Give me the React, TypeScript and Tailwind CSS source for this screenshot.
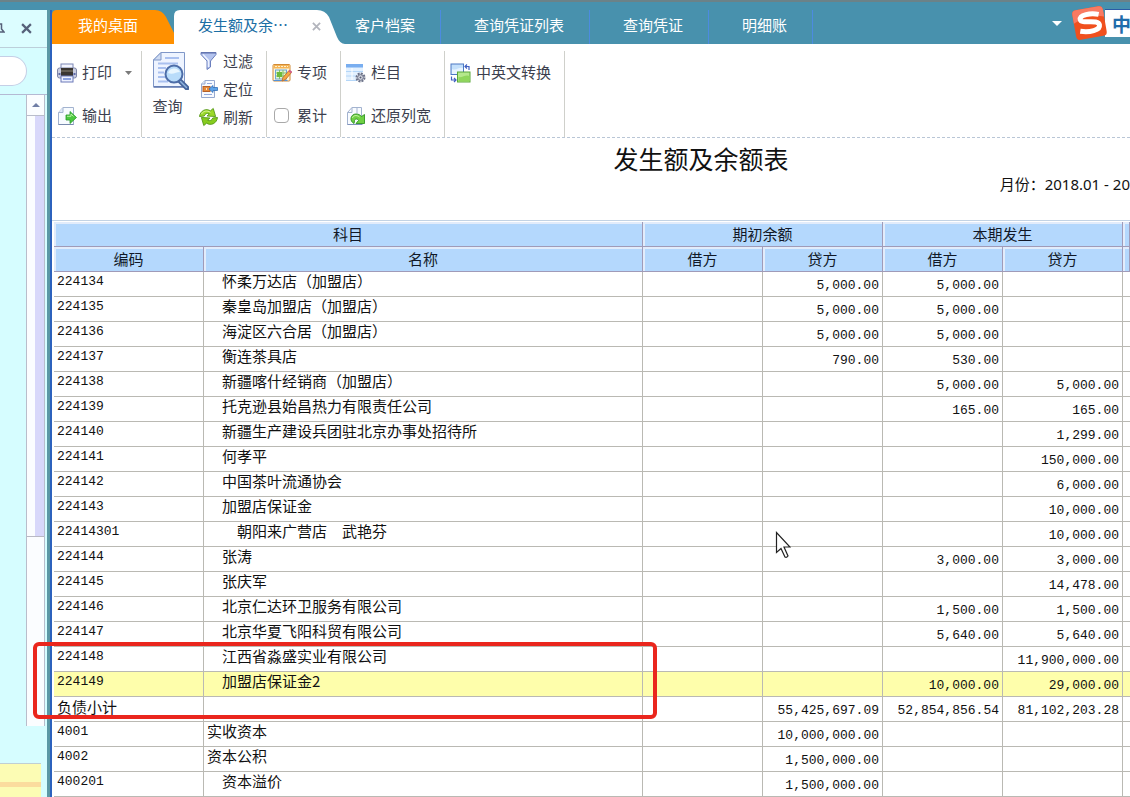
import type { ReactNode } from 'react'

type Row = {
  code: string
  name?: string
  level?: number
  amounts: [string, string, string, string]
  active?: boolean
}

const rows: Row[] = [
  { code: '224134', name: '怀柔万达店（加盟店）', level: 1, amounts: ['', '5,000.00', '5,000.00', ''] },
  { code: '224135', name: '秦皇岛加盟店（加盟店）', level: 1, amounts: ['', '5,000.00', '5,000.00', ''] },
  { code: '224136', name: '海淀区六合居（加盟店）', level: 1, amounts: ['', '5,000.00', '5,000.00', ''] },
  { code: '224137', name: '衡连茶具店', level: 1, amounts: ['', '790.00', '530.00', ''] },
  { code: '224138', name: '新疆喀什经销商（加盟店）', level: 1, amounts: ['', '', '5,000.00', '5,000.00'] },
  { code: '224139', name: '托克逊县始昌热力有限责任公司', level: 1, amounts: ['', '', '165.00', '165.00'] },
  { code: '224140', name: '新疆生产建设兵团驻北京办事处招待所', level: 1, amounts: ['', '', '', '1,299.00'] },
  { code: '224141', name: '何孝平', level: 1, amounts: ['', '', '', '150,000.00'] },
  { code: '224142', name: '中国茶叶流通协会', level: 1, amounts: ['', '', '', '6,000.00'] },
  { code: '224143', name: '加盟店保证金', level: 1, amounts: ['', '', '', '10,000.00'] },
  { code: '22414301', name: '朝阳来广营店　武艳芬', level: 2, amounts: ['', '', '', '10,000.00'] },
  { code: '224144', name: '张涛', level: 1, amounts: ['', '', '3,000.00', '3,000.00'] },
  { code: '224145', name: '张庆军', level: 1, amounts: ['', '', '', '14,478.00'] },
  { code: '224146', name: '北京仁达环卫服务有限公司', level: 1, amounts: ['', '', '1,500.00', '1,500.00'] },
  { code: '224147', name: '北京华夏飞阳科贸有限公司', level: 1, amounts: ['', '', '5,640.00', '5,640.00'] },
  { code: '224148', name: '江西省淼盛实业有限公司', level: 1, amounts: ['', '', '', '11,900,000.00'] },
  { code: '224149', name: '加盟店保证金2', level: 1, amounts: ['', '', '10,000.00', '29,000.00'], active: true },
  { code: '负债小计', amounts: ['', '55,425,697.09', '52,854,856.54', '81,102,203.28'] },
  { code: '4001', name: '实收资本', amounts: ['', '10,000,000.00', '', ''] },
  { code: '4002', name: '资本公积', amounts: ['', '1,500,000.00', '', ''] },
  { code: '400201', name: '资本溢价', level: 1, amounts: ['', '1,500,000.00', '', ''] },
]

const indent = ['pl-[3px]', 'pl-[18px]', 'pl-[33px]']

const PrintIcon = () => (
  <svg width="20" height="20" viewBox="0 0 20 20">
    <rect x="4" y="1" width="12" height="6" fill="#f4f6ff" stroke="#7b86b5" />
    <rect x="0.5" y="5" width="19" height="10" rx="2" fill="#c9cde0" stroke="#7f86a8" />
    <rect x="4" y="5" width="12" height="8" fill="#3a3631" />
    <path d="M4 8h12" stroke="#8d8676" />
    <path d="M1.500 11h2M16.500 11h2" stroke="#5e6ba8" strokeWidth="2" />
    <rect x="4" y="13" width="12" height="6" fill="#eef2ff" stroke="#6b78b8" />
    <path d="M6 16h8" stroke="#6a86d6" strokeWidth="1.500" />
  </svg>
)

const ExportIcon = () => (
  <svg width="20" height="20" viewBox="0 0 20 20">
    <path d="M6 1.500h10.500v17h-15V6.500z" fill="#f7fbff" stroke="#a3b3cf" />
    <path d="M6 1.500v5H1.500" fill="#dfe9f7" stroke="#a3b3cf" />
    <path d="M1.500 18.500h15" stroke="#7789ad" />
    <path d="M9 9h4V5.500l6.500 6-6.500 6V14H9z" fill="#4cc83f" stroke="#279a2a" strokeWidth="0.800" />
    <path d="M10 10.300h4V8l2.500 2.500" stroke="#b4f0a0" fill="none" />
  </svg>
)

const QueryIcon = () => (
  <svg width="37" height="39" viewBox="0 0 37 39">
    <path d="M9 1.500h23.500v34h-31V9z" fill="#eef4ff" stroke="#7f97c8" />
    <path d="M9 1.500V9H1.500z" fill="#cfdcf3" stroke="#7f97c8" />
    <path d="M13 7h14M6 12.500h20M6 17h8M6 21.500h6M6 26h7M6 30.500h10" stroke="#a9c0ef" strokeWidth="2" />
    <path d="M1.500 36h31" stroke="#5b74ae" strokeWidth="1.500" />
    <path d="M28 30l7 7" stroke="#46659c" strokeWidth="5" strokeLinecap="round" />
    <path d="M28.500 30.500l6 6" stroke="#8fb3df" strokeWidth="1.500" strokeLinecap="round" />
    <circle cx="22" cy="23" r="8.500" fill="#b9dcfa" stroke="#4d6da8" strokeWidth="2" />
    <path d="M16 22a6.500 6.500 0 0 1 12-1c-4 0-7 3-12 1z" fill="#e9f6ff" />
  </svg>
)

const FilterIcon = () => (
  <svg width="19" height="20" viewBox="0 0 19 20">
    <path d="M2 1.500h15v2L11.500 10v6L8 18.500V10L2 3.500z" fill="#b3c3ee" stroke="#6b7fbd" />
    <path d="M4 3.500l5.500 6V16" stroke="#eef3ff" fill="none" strokeWidth="1.500" />
    <path d="M2 2h15" stroke="#5c6ca5" />
  </svg>
)

const LocateIcon = () => (
  <svg width="19" height="20" viewBox="0 0 19 20">
    <path d="M6 1.500h9.500v17h-13V5z" fill="#f7faff" stroke="#96a9d0" />
    <path d="M6 1.500V5H2.500" stroke="#96a9d0" fill="#dfe9f7" />
    <path d="M8 4.500h5M5 15.500h8" stroke="#93aadd" />
    <rect x="4" y="7.500" width="7" height="5" fill="#e68a3a" stroke="#b3602a" />
    <path d="M7.500 9v2" stroke="#f9e3c6" />
    <path d="M18.500 8.500H14V6.500L10 10l4 3.500v-2h4.500z" fill="#5ea3e8" stroke="#2f6db8" strokeWidth="0.800" />
  </svg>
)

const RefreshIcon = () => (
  <svg width="19" height="20" viewBox="0 0 20 20">
    <path d="M0.500 9.500C1.500 3 7.500 0.500 12 3.500L15 1l2.500 8.500-9-.5 2.500-2.500C9 5.500 6 6.500 5.500 9z" fill="#9bd829" stroke="#4f9410" strokeWidth="0.900" />
    <path d="M19.500 10.500c-1 6.500-7 9-11.500 6L5 19l-2.500-8.500 9 .5L9 13.500c2 1 5 0 5.500-2.500z" fill="#86cc1e" stroke="#4f9410" strokeWidth="0.900" />
    <path d="M2.500 7C4.500 3.500 8.500 3 12 5" stroke="#d9f59a" fill="none" />
  </svg>
)

const SpecialIcon = () => (
  <svg width="20" height="20" viewBox="0 0 20 20">
    <rect x="1" y="1.500" width="17" height="16.500" rx="1" fill="#fff7dc" stroke="#d28a34" />
    <rect x="1.500" y="2" width="16" height="3.500" fill="#f4b557" />
    <path d="M3 3.500h13" stroke="#fff0cf" strokeDasharray="2 1" />
    <rect x="3.500" y="7" width="11" height="9" fill="#e6f6d6" stroke="#6da5d8" />
    <path d="M4 10h10M4 13h10M7.500 7v9M11 7v9" stroke="#86c06a" />
    <rect x="5" y="9" width="5" height="5" fill="#6dbb3c" />
    <path d="M1.500 17.500h14" stroke="#5592d6" />
    <path d="M10 18l1-3.500 6-7 2.500 2-6 7z" fill="#f5a742" stroke="#c06f2f" strokeWidth="0.900" />
    <path d="M17 7.500l2.500 2" stroke="#d05d8c" strokeWidth="2" />
  </svg>
)

const ColumnsIcon = () => (
  <svg width="20" height="20" viewBox="0 0 20 20">
    <rect x="0" y="1" width="17" height="16.500" fill="#e3f1ff" />
    <rect x="0" y="1" width="17" height="3.500" fill="#79aef0" />
    <path d="M0 8.500h17M0 13h17M0 17.500h11" stroke="#b4d6f8" />
    <path d="M6 5v12" stroke="#ffffff" />
    <circle cx="14.500" cy="14.500" r="4" fill="#eceef4" stroke="#6c7288" strokeWidth="2" strokeDasharray="2 1.100" />
    <circle cx="14.500" cy="14.500" r="2.800" fill="#d7dae4" stroke="#6c7288" />
    <circle cx="14.500" cy="14.500" r="1" fill="#555b70" />
  </svg>
)

const RestoreIcon = () => (
  <svg width="20" height="20" viewBox="0 0 20 20">
    <path d="M6 1.500h9.500v17h-14V6.500z" fill="#f8fbff" stroke="#a3b3cf" />
    <path d="M6 1.500v5H1.500M11 1.500v6" stroke="#a3b3cf" fill="none" />
    <path d="M1.500 18.500h15" stroke="#7f93bd" />
    <path
      d="M8 17.500C3 15 4.500 8 10 8c2.500 0 4.500 1 5.500 2.500L18.500 8.500v9h-8.500l2.500-3c-1-2-3.500-2-4 0-.3 1 0 2-.5 3z"
      fill="#6fd044"
      stroke="#2f9422"
      strokeWidth="0.900"
    />
    <path d="M6.500 12c.5-2.500 4-3.500 7-1" stroke="#c9f5a8" fill="none" />
  </svg>
)

const SwapIcon = () => (
  <svg width="21" height="20" viewBox="0 0 21 20">
    <rect x="1" y="1" width="12.500" height="10.500" fill="#c4e0fb" stroke="#4c79c4" />
    <path d="M2 6c4 2 7-2 11-1v6H2z" fill="#e6f3ff" />
    <rect x="7.500" y="9" width="12.500" height="10" fill="#b5e88c" stroke="#5aa83a" />
    <path d="M8.500 14c4 1 7-3 11-1v5.500h-11z" fill="#8fd65c" />
    <path d="M15.500 3.500h3.500V7M17 1.500l-2 2 2 2" fill="none" stroke="#3f5fc0" strokeWidth="1.200" />
    <path d="M1.500 13.500V17h4M4 15l2 2-2 2" fill="none" stroke="#3f5fc0" strokeWidth="1.200" />
  </svg>
)

const CloseIcon = ({ size, color }: { size: number; color: string }) => (
  <svg width={size} height={size} viewBox="0 0 10 10">
    <path d="M1 1l8 8M9 1L1 9" stroke={color} strokeWidth="2" />
  </svg>
)

const Tool = ({ icon, label, children }: { icon: ReactNode; label: string; children?: ReactNode }) => (
  <button type="button" className="flex items-center gap-[5px] whitespace-nowrap">
    {icon}
    <span>{label}</span>
    {children}
  </button>
)

const ToolGroup = ({ children }: { children: ReactNode }) => (
  <div className="grid shrink-0 auto-rows-[43px] items-center border-r border-[#cfd0cb] pr-[13px] pl-[5px]">
    {children}
  </div>
)

const Sidebar = () => (
  <aside className="flex w-[47px] shrink-0 flex-col overflow-hidden bg-[#d6fdff]">
    <div className="flex h-[38px] shrink-0 items-center justify-between border-b border-[#bccfda] bg-[#dcfdff] pr-[15px]">
      <svg width="5" height="12" viewBox="0 0 5 12">
        <path d="M0 1h1.500v5L4 9H0" stroke="#566079" strokeWidth="1.500" fill="none" />
      </svg>
      <button type="button" aria-label="关闭">
        <CloseIcon size={11} color="#56617a" />
      </button>
    </div>
    <div className="h-[46px] shrink-0 pt-[8px]">
      <input
        type="text"
        aria-label="搜索"
        className="h-[30px] w-[27px] rounded-r-full border border-l-0 border-[#c5cfe6] bg-white"
      />
    </div>
    <div className="flex h-[632px] shrink-0 justify-end border-t border-[#b5b9d3] pr-[2px]">
      <div className="w-[19px] border-x border-[#b9bdcb] bg-[#fbfdff]">
        <button
          type="button"
          aria-label="向上滚动"
          className="flex h-[21px] w-full items-center justify-center border-b border-[#b9bdcb]"
        >
          <svg width="8" height="4" viewBox="0 0 8 4">
            <path d="M0 4l4-4 4 4z" fill="#6f7ea6" />
          </svg>
        </button>
        <div className="h-[421px] border-b border-[#b9b9c4] pl-[8px]">
          <div className="h-full bg-[#d8d8fa]" />
        </div>
      </div>
    </div>
    <div className="mt-[37px] mr-[6px] flex-1 border-t border-[#c0cfd4] bg-[#fcfcb4] pt-[18px]">
      <div className="h-[5px] bg-[#fbdc9e]" />
    </div>
  </aside>
)

const Tabs = () => (
  <nav className="flex h-[34px] shrink-0 bg-[#4891ad] text-white">
    <button type="button" className="relative w-[122px] shrink-0 pr-[10px] pb-[4px]">
      <svg className="absolute inset-0" width="122" height="34" viewBox="0 0 122 34">
        <path d="M0 34V5q0-5 5-5h98q7 0 11 7l8 16v11z" fill="#ff9000" />
      </svg>
      <span className="relative">我的桌面</span>
    </button>
    <div className="relative flex w-[171px] shrink-0 items-center justify-between px-[24px] pb-[4px]">
      <svg className="absolute inset-0" width="171" height="34" viewBox="0 0 171 34">
        <path d="M0 34V6q0-6 6-6h137q8 0 12 7l8 20q3 7 8 7z" fill="#ffffff" />
      </svg>
      <button type="button" className="relative text-[#1c6fa5]">
        发生额及余…
      </button>
      <button type="button" aria-label="关闭标签" className="relative pt-[3px]">
        <CloseIcon size={9} color="#b3b5bd" />
      </button>
    </div>
    <button type="button" className="border-r border-[#4c8be0] pr-[25px] pb-[4px] pl-[10px]">
      客户档案
    </button>
    {['查询凭证列表', '查询凭证', '明细账'].map((e) => (
      <button type="button" className="border-r border-[#4c8be0] pr-[25px] pb-[4px] pl-[33px]" key={e}>
        {e}
      </button>
    ))}
    <button type="button" aria-label="更多标签" className="mr-[68px] mb-[8px] ml-auto">
      <svg width="10" height="5" viewBox="0 0 10 5">
        <path d="M0 0h10L5 5z" fill="#ffffff" />
      </svg>
    </button>
  </nav>
)

const Toolbar = () => (
  <div className="flex h-[94px] shrink-0 border-b border-dashed border-[#b9c6d6] pt-[7px] text-[#3c3f4e]">
    <ToolGroup>
      <Tool icon={<PrintIcon />} label="打印">
        <svg className="-mr-[4px] ml-[8px]" width="7" height="4" viewBox="0 0 7 4">
          <path d="M0 0h7L3.500 4z" fill="#7b7b7b" />
        </svg>
      </Tool>
      <Tool icon={<ExportIcon />} label="输出" />
    </ToolGroup>
    <div className="flex shrink-0 gap-[10px] border-r border-[#cfd0cb] pr-[13px] pl-[10px]">
      <button type="button" className="flex flex-col items-center gap-[6px]">
        <QueryIcon />
        <span className="mr-[6px] leading-[20px]">查询</span>
      </button>
      <div className="-mt-[4px] grid auto-rows-[28px] content-start items-center">
        <Tool icon={<FilterIcon />} label="过滤" />
        <Tool icon={<LocateIcon />} label="定位" />
        <Tool icon={<RefreshIcon />} label="刷新" />
      </div>
    </div>
    <ToolGroup>
      <Tool icon={<SpecialIcon />} label="专项" />
      <label className="flex items-center gap-[8px]">
        <input
          type="checkbox"
          className="ml-[2px] h-[15px] w-[15px] appearance-none rounded-sm border border-[#a9a9a9] bg-white"
        />
        累计
      </label>
    </ToolGroup>
    <ToolGroup>
      <Tool icon={<ColumnsIcon />} label="栏目" />
      <Tool icon={<RestoreIcon />} label="还原列宽" />
    </ToolGroup>
    <ToolGroup>
      <Tool icon={<SwapIcon />} label="中英文转换" />
    </ToolGroup>
  </div>
)

const HeadCell = ({ label, span }: { label?: string; span?: number }) => (
  <th
    colSpan={span}
    className="h-[25px] border-r border-b border-[#a09bb8] bg-[#b4d8fd] p-0 font-normal text-[#111827] shadow-[inset_2px_2px_0_#e2ecfb]"
  >
    {label}
  </th>
)

const BalanceTable = () => (
  <table className="w-full table-fixed border-separate border-spacing-0 leading-[20px]">
    <colgroup>
      <col className="w-[150px]" />
      <col />
      <col className="w-[120px]" />
      <col className="w-[120px]" />
      <col className="w-[120px]" />
      <col className="w-[120px]" />
      <col className="w-[7px]" />
    </colgroup>
    <thead>
      <tr>
        <HeadCell label="科目" span={2} />
        <HeadCell label="期初余额" span={2} />
        <HeadCell label="本期发生" span={2} />
        <HeadCell />
      </tr>
      <tr>
        <HeadCell label="编码" />
        <HeadCell label="名称" />
        <HeadCell label="借方" />
        <HeadCell label="贷方" />
        <HeadCell label="借方" />
        <HeadCell label="贷方" />
        <HeadCell />
      </tr>
    </thead>
    <tbody>
      {rows.map((row) => (
        <tr key={row.code} className={row.active ? 'bg-[#fefeab]' : 'bg-white'}>
          <td className="h-[25px] border-r border-b border-[#bab9b3] p-0 pl-[3px] align-top whitespace-nowrap">
            {/^\d/.test(row.code) ? (
              <span className="block font-[Liberation_Mono,monospace] text-[13px]">{row.code}</span>
            ) : (
              row.code
            )}
          </td>
          <td
            className={
              'border-r border-b border-[#bab9b3] p-0 pl-[3px] align-top leading-[18px] whitespace-nowrap ' +
              indent[row.level ?? 0]
            }
          >
            {row.name}
          </td>
          {row.amounts.map((e, i) => (
            <td
              className="border-r border-b border-[#bab9b3] p-0 pr-[3px] text-right align-bottom font-[Liberation_Mono,monospace] text-[13px]"
              key={i}
            >
              {e}
            </td>
          ))}
          <td className="border-b border-[#bab9b3] p-0" />
        </tr>
      ))}
    </tbody>
  </table>
)

const ImeBar = () => (
  <div className="absolute top-[5px] right-0 flex items-center">
    <svg className="relative" width="38" height="36" viewBox="0 0 38 36">
      <g transform="rotate(-10 19 18)">
        <rect x="3" y="3" width="31" height="30" rx="4" fill="#f0501e" />
        <path d="M3 7q0-4 4-4h23q4 0 4 4v7Q18 8 3 16z" fill="#f97a62" />
        <path
          d="M29 11C21 8 10 8 10 13c0 5 18 2 18 8.500C28 27 17 27.500 8 24.500"
          fill="none"
          stroke="#ffffff"
          strokeWidth="5"
        />
      </g>
    </svg>
    <div className="-ml-[4px] h-[28px] w-[25px] overflow-hidden border-t border-[#2b5ba5] bg-white pl-[7px] text-[19px] leading-[28px] font-bold text-[#1f6cab]">
      中
    </div>
  </div>
)

const App = () => {
  return (
    <div className="relative flex h-screen flex-col overflow-hidden bg-white font-['Noto_Sans_CJK_SC','Liberation_Sans',sans-serif] text-[15px] text-[#111]">
      <div className="h-[10px] shrink-0 border-t-2 border-[#6b8288] bg-[#4891ad]" />

      <div className="flex min-h-0 flex-1">
        <Sidebar />
        <div className="w-[5px] shrink-0 border-r-2 border-[#2c62bd] bg-[#5b98a5]" />

        <main className="flex min-w-0 flex-1 flex-col">
          <Tabs />
          <Toolbar />

          <header className="pt-[4px] pb-[26px]">
            <h1 className="pl-[220px] text-center text-[25px] leading-[32px]">发生额及余额表</h1>
            <p className="text-right font-['Noto_Sans','Noto_Sans_CJK_SC',sans-serif] leading-[20px] whitespace-nowrap">
              月份：2018.01 - 20
            </p>
          </header>

          <div className="min-h-0 flex-1 overflow-hidden border-t border-[#c3d3e4] pt-[1px] pl-[2px]">
            <BalanceTable />
          </div>
        </main>
      </div>

      <ImeBar />

      <div className="absolute top-[642px] left-[33px] h-[77px] w-[624px] rounded-md border-4 border-[#ea261d]" />

      <svg className="absolute top-[531px] left-[775px]" width="16" height="28" viewBox="0 0 16 28">
        <path
          d="M1.500 1.500v20l4.500-4 4 8.500q1.500 1 3-1L9 16h6z"
          fill="#ffffff"
          stroke="#222222"
          strokeWidth="1.200"
        />
      </svg>
    </div>
  )
}

export default App
